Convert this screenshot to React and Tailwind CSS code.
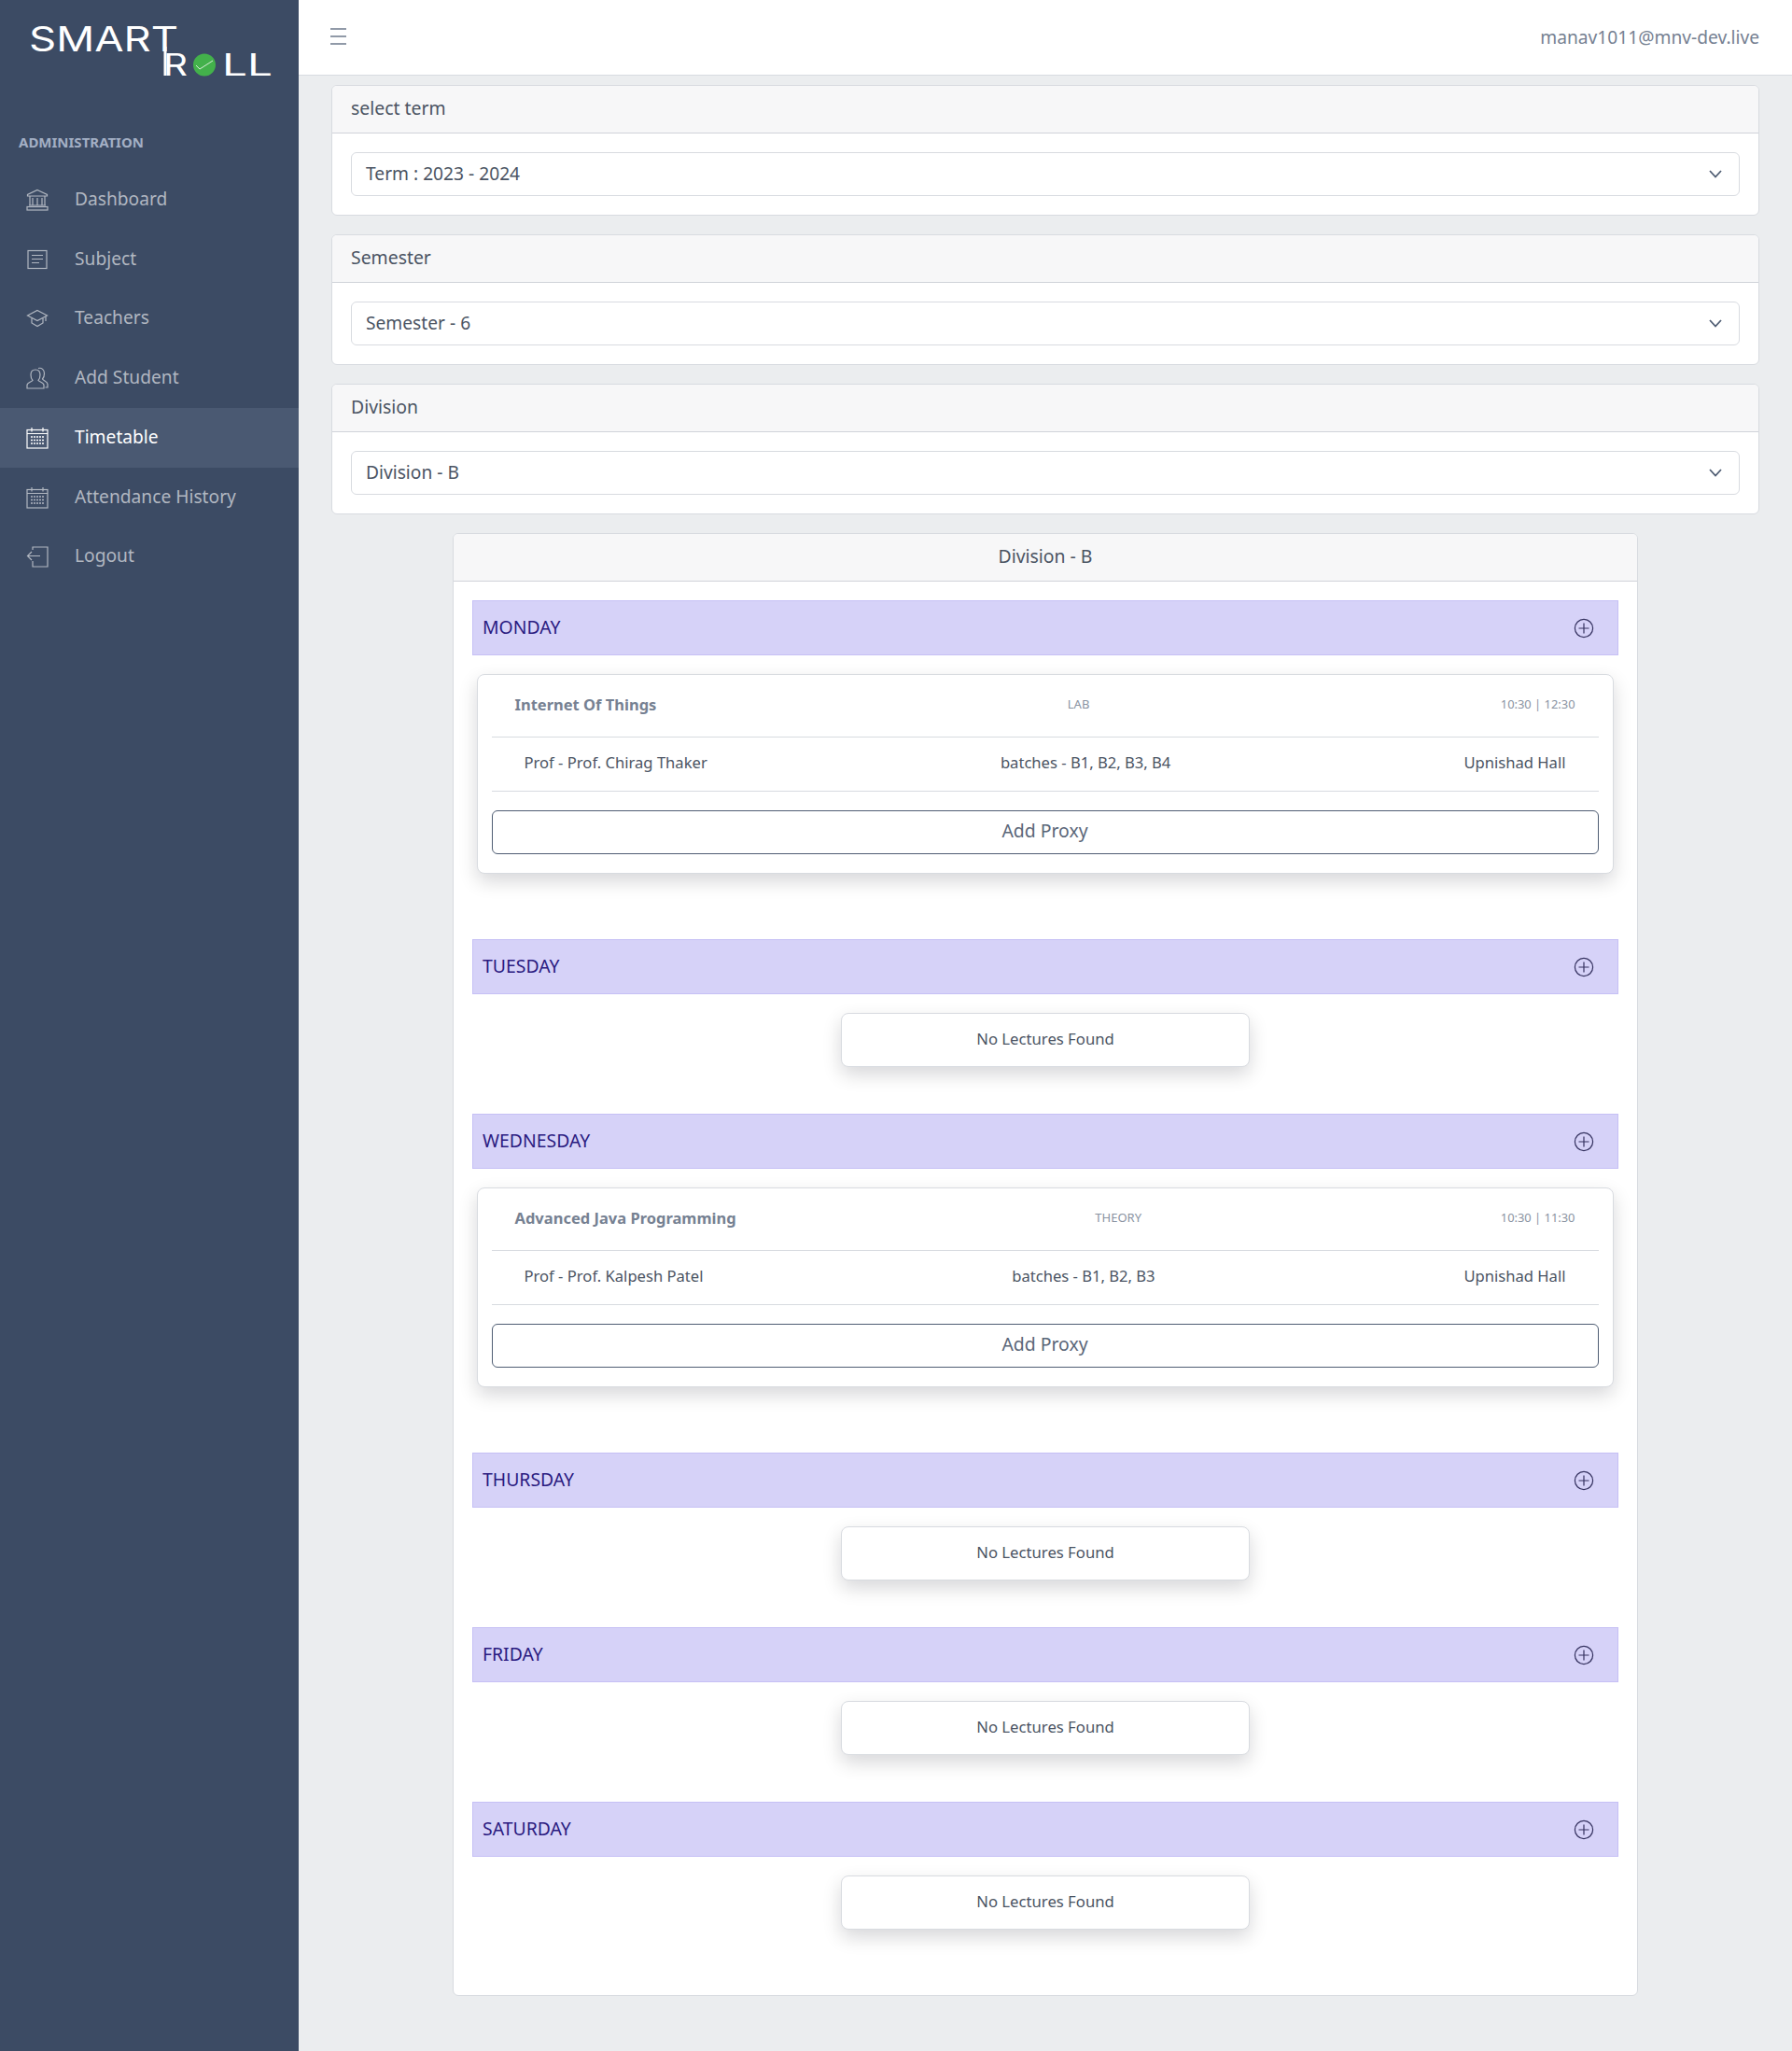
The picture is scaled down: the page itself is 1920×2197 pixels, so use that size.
import React from 'react';

// sidebar icons, drawn on a 24 box with thin strokes
const Bank = () => (
  <>
    <path d="M12 1.5 L22.5 6.5 V8 H1.5 V6.5 Z" />
    <path d="M4 8 V18 M7 10 V18 M12 10 V18 M17 10 V18 M20 8 V18 M3 18 H21" />
    <rect x="1" y="19.5" width="22" height="3.5" />
  </>
);

const Notes = () => (
  <>
    <rect x="2" y="2.5" width="20" height="19" />
    <path d="M6 7.5 H18 M6 11.5 H18 M6 15.5 H14" />
  </>
);

const Education = () => (
  <>
    <path d="M12 3.5 L22.5 9 L12 14.5 L1.5 9 Z" />
    <path d="M6 12 V17 L12 20.5 L18 17 V12" />
    <path d="M21 10 V15" />
  </>
);

const People = () => (
  <>
    <path d="M1 23 V19.5 C1 16.5 6 16 7 14.5 C5.5 13 5 11 5 8.5 C5 5 7 3 10 3 C13 3 15 5 15 8.5 C15 11 14.5 13 13 14.5 C14 16 19 16.5 19 19.5 V23 Z" />
    <path d="M13 1.5 C16.5 0.5 19.5 3 19.5 7 C19.5 9.5 19 11.5 17.5 13 C18.5 15 23 15.5 23 18.5 V22 H20.5" />
  </>
);

const Calendar = () => (
  <>
    <rect x="1" y="3.5" width="22" height="19.5" />
    <path d="M1 7.5 H23 M6 1 V5.5 M18 1 V5.5" />
    <path
      d="M5 11 H19 M5 14.5 H19 M5 18 H19"
      strokeDasharray="2 1"
      strokeWidth="1.6"
    />
  </>
);

const Logout = () => (
  <>
    <path d="M7 5 V2 H23 V23 H7 V17" />
    <path d="M15 11.5 H1.5 M6 7 L1.5 11.5 L6 16" />
  </>
);

const NAV_ITEMS = [
  { label: 'Dashboard', icon: Bank },
  { label: 'Subject', icon: Notes },
  { label: 'Teachers', icon: Education },
  { label: 'Add Student', icon: People },
  { label: 'Timetable', icon: Calendar, active: true },
  { label: 'Attendance History', icon: Calendar },
  { label: 'Logout', icon: Logout },
];

const DAYS = [
  {
    name: 'MONDAY',
    lecture: {
      title: 'Internet Of Things',
      type: 'LAB',
      time: '10:30 | 12:30',
      prof: 'Prof - Prof. Chirag Thaker',
      batches: 'batches - B1, B2, B3, B4',
      hall: 'Upnishad Hall',
    },
  },
  { name: 'TUESDAY' },
  {
    name: 'WEDNESDAY',
    lecture: {
      title: 'Advanced Java Programming',
      type: 'THEORY',
      time: '10:30 | 11:30',
      prof: 'Prof - Prof. Kalpesh Patel',
      batches: 'batches - B1, B2, B3',
      hall: 'Upnishad Hall',
    },
  },
  { name: 'THURSDAY' },
  { name: 'FRIDAY' },
  { name: 'SATURDAY' },
];

const FILTERS = [
  { heading: 'select term', value: 'Term : 2023 - 2024' },
  { heading: 'Semester', value: 'Semester - 6' },
  { heading: 'Division', value: 'Division - B' },
];

const Logo = () => (
  <svg className="block w-[320px] h-[100px]" viewBox="0 0 320 100" fill="#fff">
    <text x="31" y="55" fontSize="37" fontWeight="400" textLength="160" lengthAdjust="spacingAndGlyphs" fontFamily="Inter, sans-serif">SMART</text>
    <rect x="175.5" y="50" width="3" height="31" />
    <text x="175" y="80.5" fontSize="32" fontWeight="400" textLength="26" lengthAdjust="spacingAndGlyphs" fontFamily="Inter, sans-serif">R</text>
    <circle cx="219" cy="69.5" r="12" fill="#43b14b" />
    <path d="M210 70 L214 74 L228 65" fill="none" stroke="#d7eed8" strokeWidth="1" />
    <text x="238" y="80.5" fontSize="32" fontWeight="400" textLength="54" lengthAdjust="spacingAndGlyphs" fontFamily="Inter, sans-serif">LL</text>
  </svg>
);

const Sidebar = () => (
  <aside className="w-[320px] shrink-0 bg-[#3c4b64]">
    <Logo />
    <div className="h-[82px] pt-[41px] pl-[20px] text-[15px] leading-[22px] font-bold text-[#a3afc4]">ADMINISTRATION</div>
    <nav>
      {NAV_ITEMS.map(({ label, icon: Icon, active }) => (
        <div
          key={label}
          className={`h-[63.75px] flex items-center pl-[28px] text-[19.2px] ${
            active ? 'bg-[#4a5972] text-white' : 'text-[#b1b7c1]'
          }`}
        >
          <svg className="w-[24px] h-[24px] mr-[28px] shrink-0" viewBox="0 0 24 24" fill="none" stroke="currentColor" strokeWidth="1.2">
            <Icon />
          </svg>
          <span className="-mt-[1px]">{label}</span>
        </div>
      ))}
    </nav>
  </aside>
);

const Header = () => (
  <header className="h-[81px] bg-white border-b border-[#d8dbe0] flex items-center justify-between pl-[34px] pr-[35px]">
    <svg className="w-[17px] h-[18px] -mt-[3px]" viewBox="0 0 17 18" stroke="#6e7a8c" strokeWidth="1.3">
      <path d="M0 1 H17 M0 9 H17 M0 17 H17" />
    </svg>
    <span className="text-[19.2px] text-[#768192]">manav1011@mnv-dev.live</span>
  </header>
);

const FilterCard = ({ heading, value }) => (
  <div className="mb-[20px] bg-white border border-[#d8dbe0] rounded-[6px] overflow-hidden">
    <div className="h-[51px] bg-[#f7f7f8] border-b border-[#d0d3d9] flex items-center px-[20px] text-[19.4px]">
      <span className="-mt-[2px]">{heading}</span>
    </div>
    <div className="p-[20px]">
      <div className="h-[47px] border border-[#d8dbe0] rounded-[6px] flex items-center justify-between pl-[15px] pr-[18px] text-[19.2px]">
        <span className="-mt-[1px]">{value}</span>
        <svg className="w-[14px] h-[9px]" viewBox="0 0 14 9" fill="none" stroke="#4f5d73" strokeWidth="1.8">
          <path d="M1 1 L7 7.5 L13 1" />
        </svg>
      </div>
    </div>
  </div>
);

const LectureCard = ({ lecture }) => (
  <div className="ml-[4.5px] mr-[5.5px] mb-[70px] h-[214px] bg-white border border-[#d8dbe0] rounded-[8px] px-[15px] shadow-[0_8px_20px_rgba(0,0,21,0.16)]">
    <div className="h-[67px] border-b border-[#d8dbe0] flex items-center justify-between px-[25px] pb-[2px]">
      <span className="text-[16.5px] font-bold text-[#768192]">{lecture.title}</span>
      <span className="text-[13px] text-[#8a93a2]">{lecture.type}</span>
      <span className="text-[12.9px] text-[#8a93a2]">{lecture.time}</span>
    </div>
    <div className="h-[58px] border-b border-[#d8dbe0] flex items-center justify-between px-[35px] pb-[2px] text-[16.6px]">
      <span>{lecture.prof}</span>
      <span>{lecture.batches}</span>
      <span>{lecture.hall}</span>
    </div>
    <button className="mt-[20px] w-full h-[47px] pb-[3px] border border-[#4f5d73] rounded-[6px] text-[19.4px] text-[#5a6678]">Add Proxy</button>
  </div>
);

const EmptyCard = () => (
  <div className="mx-auto mb-[50px] w-[438px] h-[58px] pb-[2px] bg-white border border-[#d8dbe0] rounded-[8px] flex items-center justify-center text-[16.7px] shadow-[0_8px_20px_rgba(0,0,21,0.16)]">
    No Lectures Found
  </div>
);

const DaySection = ({ day }) => (
  <section>
    <div className="h-[59px] mb-[20px] bg-[#d6d2f8] border border-[#c6c0f5] flex items-center justify-between pl-[10px] pr-[25px] text-[19.4px] text-[#2a1a80]">
      <span className="-mt-[1px]">{day.name}</span>
      <svg className="w-[22px] h-[22px]" viewBox="0 0 22 22" fill="none" stroke="#34315f" strokeWidth="1.2">
        <circle cx="11" cy="11" r="9.6" />
        <path d="M11 5.5 V16.5 M5.5 11 H16.5" />
      </svg>
    </div>
    {day.lecture ? <LectureCard lecture={day.lecture} /> : <EmptyCard />}
  </section>
);

const App = () => {
  return (
    <div className="flex min-h-screen bg-[#ebedef] text-[#4b5463] font-['Noto_Sans',sans-serif]">
      <Sidebar />
      <div className="flex-1 min-w-0">
        <Header />
        <main className="pt-[10px] px-[35px]">
          {FILTERS.map((f) => (
            <FilterCard key={f.heading} heading={f.heading} value={f.value} />
          ))}
          <div className="mx-auto w-[1270px] bg-white border border-[#d8dbe0] rounded-[6px] overflow-hidden">
            <div className="h-[51px] bg-[#f7f7f8] border-b border-[#d0d3d9] flex items-center justify-center text-[19.4px]">
              <span className="-mt-[2px]">Division - B</span>
            </div>
            <div className="p-[20px]">
              {DAYS.map((day) => (
                <DaySection key={day.name} day={day} />
              ))}
            </div>
          </div>
        </main>
      </div>
    </div>
  );
};

export default App;
